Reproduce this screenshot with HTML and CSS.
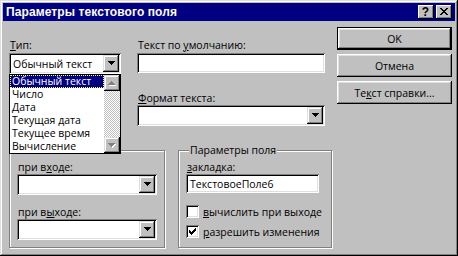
FILE: index.html
```html
<!DOCTYPE html>
<html lang="ru">
<head>
<meta charset="utf-8">
<link rel="stylesheet" href="styles.css">
</head>
<body>
<div class="win">
  <div class="titlebar">
    <span class="title">Параметры текстового поля</span>
    <div class="caps">
      <span class="cap q">?</span>
      <span class="cap"><svg width="8" height="7" viewBox="0 0 8 7"><path d="M0 0h2v1H0zM6 0h2v1H6zM1 1h2v1H1zM5 1h2v1H5zM2 2h4v1H2zM3 3h2v1H3zM2 4h4v1H2zM1 5h2v1H1zM5 5h2v1H5zM0 6h2v1H0zM6 6h2v1H6z"/></svg></span>
    </div>
  </div>
  <div class="body">
    <div class="main">
      <div class="top">
        <div class="colA">
          <div class="lbl"><u>Т</u>ип:</div>
          <div class="combo"><span class="val">Обычный текст</span><span class="ddbtn"><svg width="7" height="4" viewBox="0 0 7 4"><path d="M0 0h7v1H0zM1 1h5v1H1zM2 2h3v1H2zM3 3h1v1H3z"/></svg></span></div>
        </div>
        <div class="colB">
          <div class="lbl">Текст по <u>у</u>молчанию:</div>
          <div class="edit"></div>
          <div class="lbl lbl2"><u>Ф</u>ормат текста:</div>
          <div class="combo"><span class="val"></span><span class="ddbtn"><svg width="7" height="4" viewBox="0 0 7 4"><path d="M0 0h7v1H0zM1 1h5v1H1zM2 2h3v1H2zM3 3h1v1H3z"/></svg></span></div>
        </div>
      </div>
      <div class="groups">
        <fieldset class="grp grpL">
          <legend class="empty"></legend>
          <div class="lbl">при в<u>х</u>оде:</div>
          <div class="combo"><span class="val"></span><span class="ddbtn"><svg width="7" height="4" viewBox="0 0 7 4"><path d="M0 0h7v1H0zM1 1h5v1H1zM2 2h3v1H2zM3 3h1v1H3z"/></svg></span></div>
          <div class="lbl lbl3">при в<u>ы</u>ходе:</div>
          <div class="combo"><span class="val"></span><span class="ddbtn"><svg width="7" height="4" viewBox="0 0 7 4"><path d="M0 0h7v1H0zM1 1h5v1H1zM2 2h3v1H2zM3 3h1v1H3z"/></svg></span></div>
        </fieldset>
        <fieldset class="grp grpR">
          <legend>Параметры поля</legend>
          <div class="lbl"><u>з</u>акладка:</div>
          <div class="edit"><span class="val">ТекстовоеПоле6</span></div>
          <div class="chkrow first"><span class="chk"></span><span><u>в</u>ычислить при выходе</span></div>
          <div class="chkrow"><span class="chk"><svg width="7" height="7" viewBox="0 0 7 7"><path d="M0 2h1v3H0zM1 3h1v3H1zM2 4h1v3H2zM3 3h1v3H3zM4 2h1v3H4zM5 1h1v3H5zM6 0h1v3H6z"/></svg></span><span><u>р</u>азрешить изменения</span></div>
        </fieldset>
      </div>
    </div>
    <div class="buttons">
      <div class="btn def"><span>OK</span></div>
      <div class="btn"><span>Отмена</span></div>
      <div class="btn"><span>Те<u>к</u>ст справки...</span></div>
    </div>
  </div>
  <div class="dropdown">
    <div class="items">
      <div class="item sel"><span>Обычный текст</span></div>
      <div class="item"><span>Число</span></div>
      <div class="item"><span>Дата</span></div>
      <div class="item"><span>Текущая дата</span></div>
      <div class="item"><span>Текущее время</span></div>
      <div class="item"><span>Вычисление</span></div>
    </div>
    <div class="sbar">
      <div class="sbtn"><svg width="8" height="5" viewBox="0 0 8 5"><path fill="#fff" d="M4 1h1v1H4zM3 2h3v1H3zM2 3h5v1H2zM1 4h7v1H1z"/><path fill="#808080" d="M3 0h1v1H3zM2 1h3v1H2zM1 2h5v1H1zM0 3h7v1H0z"/></svg></div>
      <div class="track"></div>
      <div class="sbtn"><svg width="8" height="5" viewBox="0 0 8 5"><path fill="#fff" d="M1 1h7v1H1zM2 2h5v1H2zM3 3h3v1H3zM4 4h1v1H4z"/><path fill="#808080" d="M0 0h7v1H0zM1 1h5v1H1zM2 2h3v1H2zM3 3h1v1H3z"/></svg></div>
    </div>
  </div>
</div>
</body>
</html>
```
FILE: styles.css
```css
* { box-sizing: border-box; }
html, body { margin: 0; padding: 0; background: #c0c0c0; }
body { font: 400 10.5px "Open Sans", "Liberation Sans", sans-serif; color: #000; }
u { text-decoration: underline; text-underline-offset: 1px; text-decoration-thickness: 1px; }

.win {
  position: relative;
  width: 458px;
  height: 256px;
  background: #c0c0c0;
  padding: 3px;
  box-shadow: inset -1px -1px #000, inset 1px 1px #dfdfdf, inset -2px -2px #808080, inset 2px 2px #fff;
  display: flex;
  flex-direction: column;
}

.titlebar {
  height: 18px;
  background: #000080;
  color: #fff;
  display: flex;
  align-items: center;
  padding: 0 3px;
}
.title { flex: 1; font: bold 12px "Liberation Sans", Arial, sans-serif; letter-spacing: 0.1px; }
.caps { display: flex; gap: 2px; }
.cap {
  width: 16px;
  height: 14px;
  background: #c0c0c0;
  box-shadow: inset -1px -1px #000, inset 1px 1px #fff, inset -2px -2px #808080;
  color: #000;
  display: flex;
  align-items: center;
  justify-content: center;
  padding: 0 1px 1px 0;
}
.cap.q { font: bold 12px/12px "Liberation Sans", Arial, sans-serif; }

.body {
  flex: 1;
  display: flex;
  padding: 6px 0 0 6px;
  gap: 4px;
}
.main { width: 324px; display: flex; flex-direction: column; }

.top { display: flex; gap: 16px; margin-top: 12px; }
.colA { width: 112px; display: flex; flex-direction: column; }
.colB { width: 188px; display: flex; flex-direction: column; }

.lbl { height: 13px; line-height: 13px; padding-left: 1px; white-space: nowrap; }
.lbl2 { margin-top: 19px; }
.lbl3 { margin-top: 11px; }

.edit, .combo {
  height: 20px;
  background: #fff;
  box-shadow: inset 1px 1px #808080, inset -1px -1px #fff, inset 2px 2px #000, inset -2px -2px #dfdfdf;
  display: flex;
  align-items: center;
  padding: 2px;
}
.combo { height: 21px; }
.colA .combo, .colB .edit { margin-top: 1px; }
.val { flex: 1; padding-left: 2px; white-space: nowrap; }
.ddbtn {
  width: 16px;
  height: 17px;
  background: #c0c0c0;
  box-shadow: inset -1px -1px #000, inset 1px 1px #dfdfdf, inset -2px -2px #808080, inset 2px 2px #fff;
  display: flex;
  align-items: center;
  justify-content: center;
  padding-bottom: 1px;
}

.groups { display: flex; gap: 13px; margin-top: 18px; }
.grp {
  margin: 0;
  border: 1px solid #808080;
  box-shadow: inset 1px 1px #fff, 1px 1px #fff;
  padding: 4px 7px 0 7px;
  height: 104px;
  min-width: 0;
}
.grp legend {
  padding: 0 1px;
  margin-left: 3px;
  line-height: 13px;
  height: 13px;
  background: #c0c0c0;
}
.grp legend.empty { padding: 0; width: 0; }
.grpL { width: 156px; }
.grpR { width: 154px; }
.grpL .combo { width: 140px; }
.grpR .edit { width: 133px; height: 19px; }

.chkrow { display: flex; align-items: center; gap: 4px; height: 13px; }
.chkrow.first { margin-top: 12px; }
.chkrow + .chkrow { margin-top: 7px; }
.chk {
  width: 13px;
  height: 13px;
  background: #fff;
  box-shadow: inset 1px 1px #808080, inset -1px -1px #fff, inset 2px 2px #000, inset -2px -2px #dfdfdf;
  display: flex;
  align-items: center;
  justify-content: center;
}

.buttons { width: 115px; display: flex; flex-direction: column; gap: 4px; }
.btn {
  height: 23px;
  background: #c0c0c0;
  box-shadow: inset -1px -1px #000, inset 1px 1px #fff, inset -2px -2px #808080, inset 2px 2px #dfdfdf;
  display: flex;
  align-items: center;
  justify-content: center;
}
.btn.def { border: 1px solid #000; }

.dropdown {
  position: absolute;
  left: 9px;
  top: 74px;
  width: 112px;
  height: 80px;
  background: #fff;
  border: 1px solid #000;
  display: flex;
}
.items { flex: 1; }
.item { height: 13px; line-height: 13px; padding-left: 1px; white-space: nowrap; }
.item span { padding-left: 1px; }
.item.sel { background: #000080; color: #fff; outline: 1px dotted #ffff80; outline-offset: -1px; }
.sbar { width: 16px; display: flex; flex-direction: column; }
.sbtn {
  height: 16px;
  background: #c0c0c0;
  box-shadow: inset -1px -1px #000, inset 1px 1px #dfdfdf, inset -2px -2px #808080, inset 2px 2px #fff;
  display: flex;
  align-items: center;
  justify-content: center;
}
.track {
  flex: 1;
  background: repeating-conic-gradient(#c0c0c0 0 25%, #fff 0 50%) 0 0 / 2px 2px;
}
```
